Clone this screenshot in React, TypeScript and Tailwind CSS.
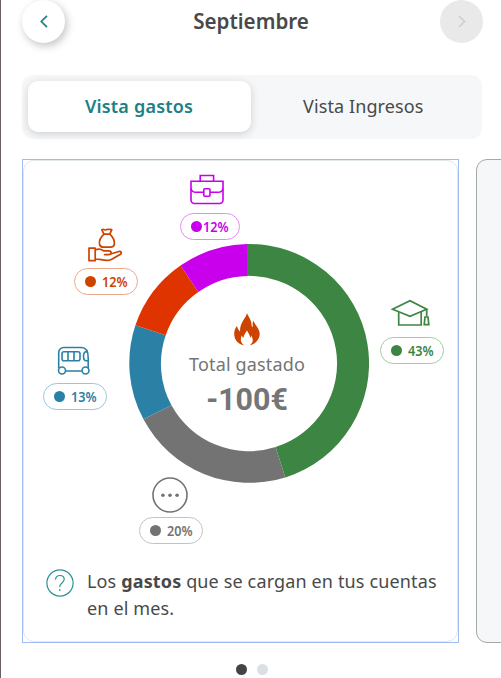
import type { ReactNode } from "react";

const icon = "fill-none stroke-current";

function Chevron({ flip }: { flip?: boolean }) {
  return (
    <svg width="8" height="13" viewBox="0 0 8 13" className={icon} strokeWidth="1.7">
      <path d={flip ? "M1 1l5.5 5.5L1 12" : "M7 .8L1.3 6.5 7 12.2"} />
    </svg>
  );
}

function Briefcase() {
  return (
    <svg width="36" height="32" viewBox="0 0 36 32" className={`${icon} mr-[7px]`} strokeWidth="1.600">
      <path d="M11.2 7V1.500h13.4V7" />
      <path d="M2 7.2h32V26a3.5 3.5 0 0 1-3.5 3.5h-25A3.5 3.5 0 0 1 2 26z" />
      <path d="M2 14.500c.4 2.700 2.400 3.800 5 3.800h7.700M34 14.500c-.4 2.700-2.400 3.800-5 3.800h-7.700" />
      <rect x="14.800" y="14.700" width="6.200" height="7.600" rx="1" />
    </svg>
  );
}

function HandMoney() {
  return (
    <svg width="36" height="36" viewBox="0 0 36 36" className={`${icon} mr-[3px]`} strokeWidth="1.700" strokeLinejoin="round" strokeLinecap="round">
      <path d="M17 7.200L14.800 2.800c1.500-1.200 2.800.3 4 .2s1.400-1 2.700-.6 2.300-.6 3.300.3L22.800 7.200z" />
      <path d="M17 7.200c-3.600 3.300-5 6.600-4.500 9.800.4 2.400 2 3.200 4.200 3.200h6.500c2.400 0 4-1 4.200-3.300.3-3.300-1.300-6.600-4.600-9.700" />
      <path d="M2 21.200h6.200v12.500H2zM8.200 23c3-1.300 5.600-1.200 8.300.8h5.200c3.200 0 3.200 3.800 0 3.800h-4M24.300 26.800l7.600-2.300c2.500-.3 3.300 1.700 1.200 2.900l-8.800 5c-1.600.8-2.700 1-4.500 1-4.500 0-7.200-1.600-11.600-1.400" />
    </svg>
  );
}

function Bus() {
  return (
    <svg width="36" height="30" viewBox="0 0 36 30" className={`${icon} mr-[2px]`} strokeWidth="1.600">
      <path d="M2.700 22.200V6.500A5 5 0 0 1 7.700 1.500h17.800c4.500 0 6.700 4.500 6.700 10.500v10.200M9.300 25h16.400" />
      <rect x="6" y="5.700" width="18" height="9" rx="2" />
      <path d="M12 5.700v9M18 5.700v9M32 14.700h-1.700c-3.700 0-3.700-9 0-9h.8" />
      <circle cx="6" cy="24.500" r="3.500" />
      <circle cx="29.500" cy="24.500" r="3.500" />
    </svg>
  );
}

function GradCap() {
  return (
    <svg width="40" height="28" viewBox="0 0 40 28" className={`${icon} mr-[4px]`} strokeWidth="1.700">
      <path d="M2.500 10.200L20 1.700l16.700 8.500L20 17.300z" />
      <path d="M8.700 13.300V26h22.500V13M36.700 10.200v7" />
      <path d="M35 18h3l.8 7.700h-4.600z" />
    </svg>
  );
}

function More() {
  return (
    <svg width="36" height="36" viewBox="0 0 36 36" className={`${icon} mr-[2px]`} strokeWidth="1.600">
      <circle cx="18" cy="18" r="17" />
      <g className="fill-current stroke-none">
        <circle cx="10.900" cy="18.200" r="1.800" />
        <circle cx="18" cy="18.200" r="1.800" />
        <circle cx="25.100" cy="18.200" r="1.800" />
      </g>
    </svg>
  );
}

function Flame() {
  return (
    <svg width="26" height="33" viewBox="0 0 26 33" className="fill-[#cc4400]">
      <path d="M13 0c-.5 4.500-7.200 9-7 18.500C4.300 17 3.500 15.300 3 13 1 15.300.2 18 .2 20.800.2 26.500 3.500 31 10 32.500c-4.500-4-3.200-7.500-2.200-10 .5 1.200 1 1.800 1.700 2.300.2-2.800 2-5 3.500-7.300 1.200 2.600 3 4.200 3.200 7.300.6-.5.8-1.200 1-2.300 1.500 2.700 3 6.500-1.200 9.500 6-1 9.700-6 9.700-11.200 0-5.300-4.500-8.500-6.500-13.300-.6 2-.8 4-.3 6.500-1.300-.5-1.300-1.300-1.400-2.500C17.500 7 14.500 4 13 0z" />
    </svg>
  );
}

function Category({ className, pill, tight, percent, children }: { className: string; pill: string; tight?: boolean; percent: string; children: ReactNode }) {
  return (
    <div className={`absolute flex flex-col items-center ${className}`}>
      {children}
      <div className={`flex h-[27px] items-center rounded-full border bg-white ${tight ? "w-[60px] pl-[9.500px]" : "w-[64px] pl-[9.500px]"} ${pill}`}>
        <span className="size-[11px] shrink-0 rounded-full bg-current" />
        <span className={`origin-left scale-x-[0.94] pt-[2px] text-[13.5px] leading-none font-semibold ${tight ? "ml-[1.500px]" : "ml-[6px]"}`}>{percent}</span>
      </div>
    </div>
  );
}

function Donut() {
  return (
    <svg width="240" height="239" viewBox="129 243.500 240 240" preserveAspectRatio="none">
      <path fill="#3d8542" d="M247 243.520A120 120 0 0 1 285.300 477.900L275.600 447.400A88 88 0 0 0 247 275.520z" />
      <path fill="#737373" d="M285.300 477.900A120 120 0 0 1 143.500 419.600L171.500 405.500A88 88 0 0 0 275.600 447.400z" />
      <path fill="#2b80a6" d="M143.500 419.600A120 120 0 0 1 135.400 325.200L165.700 335.100A88 88 0 0 0 171.500 405.500z" />
      <path fill="#e03400" d="M135.400 325.200A120 120 0 0 1 180.500 265.200L198.300 291.700A88 88 0 0 0 165.700 335.100z" />
      <path fill="#c800eb" d="M180.500 265.200A120 120 0 0 1 247 243.520V275.520A88 88 0 0 0 198.300 291.700z" />
    </svg>
  );
}

export default function App() {
  return (
    <div className="h-[678px] w-[501px] overflow-hidden border-l border-[#6b5f63] bg-white pl-[21px] font-['Noto_Sans',sans-serif] text-[#494949]">
      <header className="flex h-[43px] w-[461px] items-center justify-between">
        <button className="flex size-[43px] items-center justify-center rounded-full bg-white text-[#1c8086] shadow-[2px_3px_8px_rgba(0,0,0,0.24)]">
          <Chevron />
        </button>
        <h1 className="mr-[2px] scale-x-[0.98] text-[21px] leading-none font-semibold">Septiembre</h1>
        <button className="flex size-[43px] items-center justify-center rounded-full bg-[#e9e9e9] text-[#cecece]">
          <Chevron flip />
        </button>
      </header>

      <nav className="mt-[32px] flex h-[64px] w-[460px] rounded-[11px] bg-[#f6f7f9] p-[6px] pl-[5.500px] text-[18px]">
        <div className="flex h-[51px] w-[223px] items-center justify-center rounded-[10px] bg-white text-[#1c8086] shadow-[0_2px_8px_rgba(0,0,0,0.16)]">
          <span className="font-semibold tracking-[0.2px]">Vista gastos</span>
        </div>
        <div className="flex h-[51px] flex-1 items-center justify-center">
          <span className="tracking-[0.1px]">Vista Ingresos</span>
        </div>
      </nav>

      <div className="mt-[20px] flex w-[540px] gap-[17px]">
        <section className="h-[484px] w-[437px] shrink-0 border border-[#a0bdf3]">
          <div className="flex h-full flex-col rounded-[11px] border border-[#e2e7e9]">
            <div className="relative h-[407px]">
              <div className="absolute top-[83px] left-[105px] h-[239px] w-[240px]">
                <Donut />
                <div className="absolute inset-0 flex flex-col items-center pt-[69px] pr-[4px] text-[#757575]">
                  <Flame />
                  <span className="mt-[6px] text-[18px] leading-[24px] tracking-[0.15px] whitespace-nowrap">Total gastado</span>
                  <span className="mt-[7px] scale-x-[0.95] font-['Roboto',sans-serif] text-[32px] leading-[32px] font-bold">-100€</span>
                </div>
              </div>
              <Category className="top-[13px] left-[156px] gap-[7px] text-[#c800eb]" pill="border-[#e48bf3]" tight percent="12%">
                <Briefcase />
              </Category>
              <Category className="top-[66px] left-[50px] gap-[5px] text-[#cc4400]" pill="border-[#e9a98d]" percent="12%">
                <HandMoney />
              </Category>
              <Category className="top-[185px] left-[19px] gap-[7px] text-[#2b80a6]" pill="border-[#9cc6d8]" percent="13%">
                <Bus />
              </Category>
              <Category className="top-[138px] left-[356px] gap-[10px] text-[#3d8542]" pill="border-[#a4caa6]" percent="43%">
                <GradCap />
              </Category>
              <Category className="top-[316px] left-[115px] gap-[4px] text-[#737373]" pill="border-[#c2c2c2]" percent="20%">
                <More />
              </Category>
            </div>
            <div className="flex pl-[22px]">
              <svg width="28" height="28" viewBox="0 0 28 28" className="mt-[1px] shrink-0 fill-none stroke-[#2b9196]" strokeWidth="1.200">
                <circle cx="14" cy="14" r="13.100" />
                <path d="M9.500 10.600C9.700 8 11.300 6.500 13.800 6.500c2.600 0 4.400 1.500 4.400 3.800 0 3.700-4.400 3.500-4.400 7v1" />
                <path d="M13.800 20v2" />
              </svg>
              <p className="ml-[13px] text-[18px] leading-[27px] tracking-[0.14px] whitespace-nowrap">
                Los <b className="font-bold">gastos</b> que se cargan en tus cuentas
                <br />
                en el mes.
              </p>
            </div>
          </div>
        </section>
        <section className="h-[484px] w-[60px] shrink-0 rounded-[11px] border border-[#a3a8a8] bg-[#f6f7f9]" />
      </div>

      <div className="mt-[21px] flex w-[460px] justify-center gap-[10px]">
        <span className="size-[11px] rounded-full bg-[#444444]" />
        <span className="size-[11px] rounded-full bg-[#d9dfe2]" />
      </div>
    </div>
  );
}
